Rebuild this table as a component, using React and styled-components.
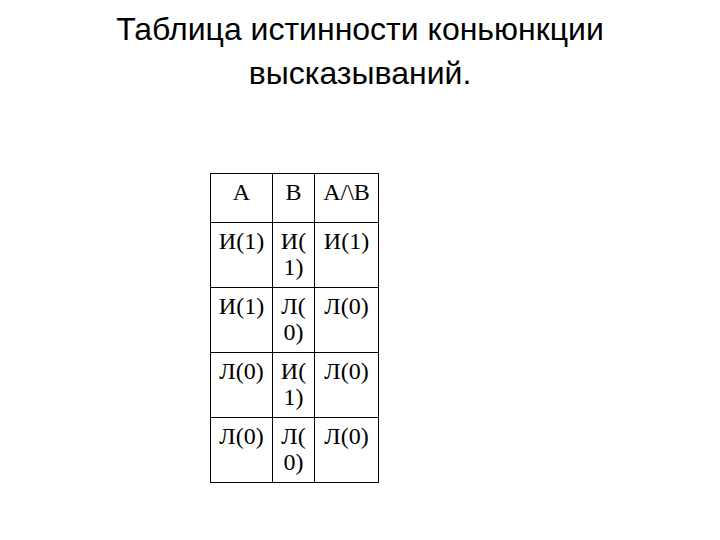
import styled, { createGlobalStyle } from "styled-components";

const GlobalStyle = createGlobalStyle`
  html, body {
    margin: 0;
    padding: 0;
    background: #ffffff;
  }
`;

const rows = [
  ["И(1)", "И(1)", "И(1)"],
  ["И(1)", "Л(0)", "Л(0)"],
  ["Л(0)", "И(1)", "Л(0)"],
  ["Л(0)", "Л(0)", "Л(0)"],
];

function App() {
  return (
    <>
      <GlobalStyle />
      <Slide>
        <Title>
          Таблица истинности коньюнкции
          <br />
          высказываний.
        </Title>
        <TableWrap>
          <Truth>
            <colgroup>
              <col style={{ width: 62 }} />
              <col style={{ width: 42 }} />
              <col style={{ width: 64 }} />
            </colgroup>
            <thead>
              <HeadRow>
                <Cell>A</Cell>
                <Cell>B</Cell>
                <Cell>A/\B</Cell>
              </HeadRow>
            </thead>
            <tbody>
              {rows.map((r, i) => (
                <BodyRow key={i}>
                  {r.map((v, j) => (
                    <Cell key={j}>{v}</Cell>
                  ))}
                </BodyRow>
              ))}
            </tbody>
          </Truth>
        </TableWrap>
      </Slide>
    </>
  );
}
export default App;

const Slide = styled.div`
  width: 720px;
  height: 540px;
  background: #fff;
  overflow: hidden;
`;

const Title = styled.h1`
  margin: 0;
  padding-top: 7px;
  font-family: "Liberation Sans", Arial, sans-serif;
  font-weight: normal;
  font-size: 32px;
  line-height: 44px;
  text-align: center;
  color: #000;
`;

const TableWrap = styled.div`
  padding-left: 210px;
  padding-top: 78px;
`;

const Truth = styled.table`
  border-collapse: collapse;
  table-layout: fixed;
  width: 168px;
  font-family: "Liberation Serif", "Times New Roman", serif;
  font-size: 24px;
  line-height: 26px;
  color: #000;
`;

const HeadRow = styled.tr`
  height: 49px;
`;

const BodyRow = styled.tr`
  height: 65px;
`;

const Cell = styled.td`
  border: 1.5px solid #000;
  padding: 5px 3px 0;
  vertical-align: top;
  text-align: center;
  line-break: anywhere;
`;
